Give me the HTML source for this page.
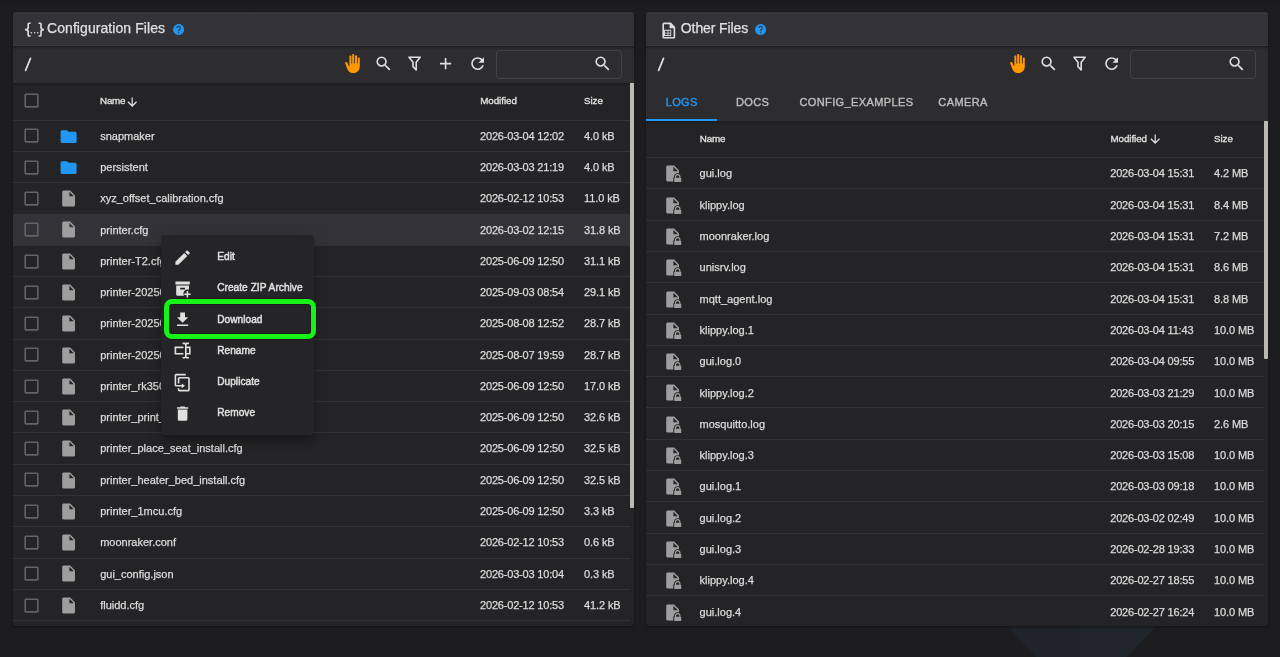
<!DOCTYPE html><html><head><meta charset="utf-8"><style>
html,body{margin:0;padding:0}
body{width:1280px;height:657px;overflow:hidden;position:relative;background:#1d1d1f;font-family:"Liberation Sans",sans-serif}
.t{position:absolute;line-height:1;white-space:nowrap;-webkit-text-stroke:0.25px currentColor}
.ic{position:absolute;display:block}
.b{position:absolute}
.wrap{position:absolute;left:0;top:0;width:1280px;height:657px;will-change:transform}

</style></head><body>
<div class="wrap">
<div class="b" style="left:0;top:0;width:1280px;height:12px;background:linear-gradient(#1a1a1c,#1d1d1f)"></div>
<svg class="ic" style="left:0;top:0;width:1280px;height:657px" viewBox="0 0 1280 657"><path d="M1006,625 L1157,625 L1127,657 L1036,657 Z" fill="#1f232a"/><path d="M1081,625 L1157,625 L1127,657 L1081,657 Z" fill="#1f252b"/></svg>
</div>
<div class="b" style="left:13px;top:12px;width:621px;height:613.5px;border-radius:3px;background:#242426;box-shadow:0 1px 3px rgba(0,0,0,.45)"></div>
<div class="wrap" style="clip-path:inset(12px 646px 31.5px 13px round 3px)">
<div class="b" style="left:13px;top:12px;width:621px;height:33.5px;background:#333237"></div>
<div class="b" style="left:13px;top:12.6px;width:621px;height:1px;background:#38373c"></div>
<div class="b" style="left:13px;top:44.5px;width:621px;height:1px;background:#3b3a3f"></div>
<div class="b" style="left:13px;top:45.5px;width:621px;height:1.5px;background:#1f1f21"></div>
<div class="b" style="left:13px;top:47px;width:621px;height:36px;background:#2d2d30"></div>
<div class="b" style="left:13px;top:47px;width:621px;height:3px;background:linear-gradient(rgba(0,0,0,.22),rgba(0,0,0,0))"></div>
<svg class="ic" style="left:25.00px;top:20.00px;width:19.2px;height:19.2px" viewBox="0 0 24 24"><path fill="#e0e0e0" fill-rule="nonzero" d="M5,3H7V5H5V10A2,2 0 0,1 3,12A2,2 0 0,1 5,14V19H7V21H5C3.930,20.730 3,20.100 3,19V15A2,2 0 0,0 1,13H0V11H1A2,2 0 0,0 3,9V5A2,2 0 0,1 5,3M19,3A2,2 0 0,1 21,5V9A2,2 0 0,0 23,11H24V13H23A2,2 0 0,0 21,15V19A2,2 0 0,1 19,21H17V19H19V14A2,2 0 0,1 21,12A2,2 0 0,1 19,10V5H17V3H19M12,15A1,1 0 0,1 13,16A1,1 0 0,1 12,17A1,1 0 0,1 11,16A1,1 0 0,1 12,15M8,15A1,1 0 0,1 9,16A1,1 0 0,1 8,17A1,1 0 0,1 7,16A1,1 0 0,1 8,15M16,15A1,1 0 0,1 17,16A1,1 0 0,1 16,17A1,1 0 0,1 15,16A1,1 0 0,1 16,15Z"/></svg>
<div class="t" style="left:47.00px;top:21.15px;font-size:14px;color:#e0e0e0;letter-spacing:0.07px;">Configuration Files</div>
<svg class="ic" style="left:171.90px;top:23.40px;width:13.2px;height:13.2px" viewBox="0 0 24 24"><path fill="#2196f3" fill-rule="nonzero" d="M15.07,11.25L14.17,12.17C13.45,12.89 13,13.5 13,15H11V14.5C11,13.39 11.45,12.39 12.17,11.670L13.41,10.410C13.780,10.050 14,9.550 14,9C14,7.890 13.100,7 12,7A2,2 0 0,0 10,9H8A4,4 0 0,1 12,5A4,4 0 0,1 16,9C16,9.880 15.640,10.670 15.070,11.250M13,19H11V17H13M12,2A10,10 0 0,0 2,12A10,10 0 0,0 12,22A10,10 0 0,0 22,12C22,6.470 17.500,2 12,2Z"/></svg>
<svg class="ic" style="left:13px;top:45px;width:30px;height:38px" viewBox="0 0 30 38"><line x1="12.6" y1="25.4" x2="17.5" y2="13.4" stroke="#e0e0e0" stroke-width="1.7" stroke-linecap="round"/></svg>
<div class="b" style="left:496px;top:50px;width:123.5px;height:27px;border:1px solid #434346;border-radius:4px"></div>
<svg class="ic" style="left:592.80px;top:54.30px;width:19.2px;height:19.2px" viewBox="0 0 24 24"><path fill="#e0e0e0" fill-rule="nonzero" d="M9.5,3A6.5,6.5 0 0,1 16,9.5C16,11.11 15.41,12.59 14.44,13.73L14.71,14H15.5L20.5,19L19,20.5L14,15.5V14.71L13.73,14.44C12.59,15.41 11.11,16 9.5,16A6.5,6.5 0 0,1 3,9.5A6.5,6.5 0 0,1 9.5,3M9.5,5C7,5 5,7 5,9.5C5,12 7,14 9.5,14C12,14 14,12 14,9.5C14,7 12,5 9.5,5Z"/></svg>
<svg class="ic" style="left:342.98px;top:54.20px;width:19.2px;height:19.2px" viewBox="0 0 24 24"><path fill="#ff9800" fill-rule="nonzero" d="M13 24C9.74 24 6.81 22 5.6 19L2.57 11.37C2.26 10.58 3 9.79 3.81 10.05L4.6 10.31C5.16 10.5 5.62 10.92 5.84 11.47L7.25 15H8V3.25C8 2.56 8.56 2 9.25 2S10.5 2.56 10.5 3.25V12H11.5V1.25C11.5 .56 12.06 0 12.75 0S14 .56 14 1.25V12H15V2.75C15 2.06 15.56 1.5 16.25 1.5C16.94 1.5 17.5 2.06 17.5 2.75V12H18.5V5.75C18.5 5.06 19.06 4.5 19.75 4.5S21 5.06 21 5.75V16C21 20.42 17.42 24 13 24Z"/></svg>
<svg class="ic" style="left:373.71px;top:54.20px;width:19.2px;height:19.2px" viewBox="0 0 24 24"><path fill="#e0e0e0" fill-rule="nonzero" d="M9.5,3A6.5,6.5 0 0,1 16,9.5C16,11.11 15.41,12.59 14.44,13.73L14.71,14H15.5L20.5,19L19,20.5L14,15.5V14.71L13.73,14.44C12.59,15.41 11.11,16 9.5,16A6.5,6.5 0 0,1 3,9.5A6.5,6.5 0 0,1 9.5,3M9.5,5C7,5 5,7 5,9.5C5,12 7,14 9.5,14C12,14 14,12 14,9.5C14,7 12,5 9.5,5Z"/></svg>
<svg class="ic" style="left:405.04px;top:54.20px;width:19.2px;height:19.2px" viewBox="0 0 24 24"><path fill="#e0e0e0" fill-rule="nonzero" d="M15,19.88C15.04,20.18 14.94,20.5 14.71,20.71C14.32,21.1 13.69,21.1 13.3,20.71L9.29,16.7C9.06,16.47 8.96,16.16 9,15.87V10.75L4.21,4.62C3.87,4.19 3.95,3.56 4.38,3.22C4.57,3.08 4.78,3 5,3V3H19V3C19.22,3 19.43,3.08 19.62,3.22C20.05,3.56 20.13,4.19 19.79,4.62L15,10.75V19.88M7.04,5L11,10.06V15.58L13,17.58V10.05L16.96,5H7.04Z"/></svg>
<svg class="ic" style="left:436.37px;top:54.20px;width:19.2px;height:19.2px" viewBox="0 0 24 24"><path fill="#e0e0e0" fill-rule="nonzero" d="M19,13H13V19H11V13H5V11H11V5H13V11H19V13Z"/></svg>
<svg class="ic" style="left:467.70px;top:54.20px;width:19.2px;height:19.2px" viewBox="0 0 24 24"><path fill="#e0e0e0" fill-rule="nonzero" d="M17.65,6.35C16.2,4.9 14.21,4 12,4A8,8 0 0,0 4,12A8,8 0 0,0 12,20C15.73,20 18.84,17.45 19.73,14H17.65C16.83,16.33 14.61,18 12,18A6,6 0 0,1 6,12A6,6 0 0,1 12,6C13.66,6 15.14,6.69 16.22,7.78L13,11H20V4L17.65,6.35Z"/></svg>
<div class="b" style="left:13px;top:83px;width:617px;height:3px;background:linear-gradient(rgba(0,0,0,.25),rgba(0,0,0,0))"></div>
<svg class="ic" style="left:21.60px;top:91.40px;width:19px;height:19px" viewBox="0 0 24 24"><path fill="#636365" fill-rule="nonzero" d="M19,3H5C3.89,3 3,3.89 3,5V19A2,2 0 0,0 5,21H19A2,2 0 0,0 21,19V5C21,3.89 20.1,3 19,3M19,5V19H5V5H19Z"/></svg>
<div class="t" style="left:100.00px;top:96.00px;font-size:9.8px;color:#e2e2e2;-webkit-text-stroke:0.3px currentColor;letter-spacing:-0.2px;">Name</div>
<svg class="ic" style="left:125.20px;top:94.60px;width:14.4px;height:14.4px" viewBox="0 0 24 24"><path fill="#e2e2e2" fill-rule="nonzero" d="M11,4H13V16L18.5,10.5L19.92,11.92L12,19.84L4.08,11.92L5.5,10.5L11,16V4Z"/></svg>
<div class="t" style="left:480.20px;top:96.00px;font-size:9.8px;color:#e2e2e2;-webkit-text-stroke:0.3px currentColor;letter-spacing:-0.05px;">Modified</div>
<div class="t" style="left:584.00px;top:96.00px;font-size:9.8px;color:#e2e2e2;-webkit-text-stroke:0.3px currentColor;letter-spacing:-0.05px;">Size</div>
<div class="b" style="left:13px;top:119.7px;width:617px;height:1px;background:#333336"></div>
<div class="b" style="left:13px;top:150.97px;width:617px;height:1px;background:#333336"></div>
<svg class="ic" style="left:21.60px;top:126.40px;width:19px;height:19px" viewBox="0 0 24 24"><path fill="#636365" fill-rule="nonzero" d="M19,3H5C3.89,3 3,3.89 3,5V19A2,2 0 0,0 5,21H19A2,2 0 0,0 21,19V5C21,3.89 20.1,3 19,3M19,5V19H5V5H19Z"/></svg>
<svg class="ic" style="left:59.40px;top:126.80px;width:19.2px;height:19.2px" viewBox="0 0 24 24"><path fill="#2196f3" fill-rule="nonzero" d="M10,4H4C2.89,4 2,4.89 2,6V18A2,2 0 0,0 4,20H20A2,2 0 0,0 22,18V8C22,6.89 21.1,6 20,6H12L10,4Z"/></svg>
<div class="t" style="left:100.20px;top:130.69px;font-size:11px;color:#dcdcdc;">snapmaker</div>
<div class="t" style="left:480.00px;top:130.69px;font-size:11px;color:#dcdcdc;letter-spacing:-0.18px;">2026-03-04 12:02</div>
<div class="t" style="left:584.00px;top:130.69px;font-size:11px;color:#dcdcdc;letter-spacing:-0.1px;">4.0 kB</div>
<div class="b" style="left:13px;top:182.25px;width:617px;height:1px;background:#333336"></div>
<svg class="ic" style="left:21.60px;top:157.68px;width:19px;height:19px" viewBox="0 0 24 24"><path fill="#636365" fill-rule="nonzero" d="M19,3H5C3.89,3 3,3.89 3,5V19A2,2 0 0,0 5,21H19A2,2 0 0,0 21,19V5C21,3.89 20.1,3 19,3M19,5V19H5V5H19Z"/></svg>
<svg class="ic" style="left:59.40px;top:158.08px;width:19.2px;height:19.2px" viewBox="0 0 24 24"><path fill="#2196f3" fill-rule="nonzero" d="M10,4H4C2.89,4 2,4.89 2,6V18A2,2 0 0,0 4,20H20A2,2 0 0,0 22,18V8C22,6.89 21.1,6 20,6H12L10,4Z"/></svg>
<div class="t" style="left:100.20px;top:161.96px;font-size:11px;color:#dcdcdc;">persistent</div>
<div class="t" style="left:480.00px;top:161.96px;font-size:11px;color:#dcdcdc;letter-spacing:-0.18px;">2026-03-03 21:19</div>
<div class="t" style="left:584.00px;top:161.96px;font-size:11px;color:#dcdcdc;letter-spacing:-0.1px;">4.0 kB</div>
<div class="b" style="left:13px;top:213.52px;width:617px;height:1px;background:#333336"></div>
<svg class="ic" style="left:21.60px;top:188.95px;width:19px;height:19px" viewBox="0 0 24 24"><path fill="#636365" fill-rule="nonzero" d="M19,3H5C3.89,3 3,3.89 3,5V19A2,2 0 0,0 5,21H19A2,2 0 0,0 21,19V5C21,3.89 20.1,3 19,3M19,5V19H5V5H19Z"/></svg>
<svg class="ic" style="left:59.10px;top:189.15px;width:19.2px;height:19.2px" viewBox="0 0 24 24"><path fill="#9e9e9e" fill-rule="nonzero" d="M13,9V3.5L18.5,9M6,2C4.89,2 4,2.89 4,4V20A2,2 0 0,0 6,22H18A2,2 0 0,0 20,20V8L14,2H6Z"/></svg>
<div class="t" style="left:100.20px;top:193.24px;font-size:11px;color:#dcdcdc;">xyz_offset_calibration.cfg</div>
<div class="t" style="left:480.00px;top:193.24px;font-size:11px;color:#dcdcdc;letter-spacing:-0.18px;">2026-02-12 10:53</div>
<div class="t" style="left:584.00px;top:193.24px;font-size:11px;color:#dcdcdc;letter-spacing:-0.1px;">11.0 kB</div>
<div class="b" style="left:13px;top:214.52px;width:617px;height:30.27px;background:#333337"></div>
<div class="b" style="left:13px;top:244.80px;width:617px;height:1px;background:#333336"></div>
<svg class="ic" style="left:21.60px;top:220.22px;width:19px;height:19px" viewBox="0 0 24 24"><path fill="#636365" fill-rule="nonzero" d="M19,3H5C3.89,3 3,3.89 3,5V19A2,2 0 0,0 5,21H19A2,2 0 0,0 21,19V5C21,3.89 20.1,3 19,3M19,5V19H5V5H19Z"/></svg>
<svg class="ic" style="left:59.10px;top:220.42px;width:19.2px;height:19.2px" viewBox="0 0 24 24"><path fill="#9e9e9e" fill-rule="nonzero" d="M13,9V3.5L18.5,9M6,2C4.89,2 4,2.89 4,4V20A2,2 0 0,0 6,22H18A2,2 0 0,0 20,20V8L14,2H6Z"/></svg>
<div class="t" style="left:100.20px;top:224.51px;font-size:11px;color:#dcdcdc;">printer.cfg</div>
<div class="t" style="left:480.00px;top:224.51px;font-size:11px;color:#dcdcdc;letter-spacing:-0.18px;">2026-03-02 12:15</div>
<div class="t" style="left:584.00px;top:224.51px;font-size:11px;color:#dcdcdc;letter-spacing:-0.1px;">31.8 kB</div>
<div class="b" style="left:13px;top:276.07px;width:617px;height:1px;background:#333336"></div>
<svg class="ic" style="left:21.60px;top:251.50px;width:19px;height:19px" viewBox="0 0 24 24"><path fill="#636365" fill-rule="nonzero" d="M19,3H5C3.89,3 3,3.89 3,5V19A2,2 0 0,0 5,21H19A2,2 0 0,0 21,19V5C21,3.89 20.1,3 19,3M19,5V19H5V5H19Z"/></svg>
<svg class="ic" style="left:59.10px;top:251.70px;width:19.2px;height:19.2px" viewBox="0 0 24 24"><path fill="#9e9e9e" fill-rule="nonzero" d="M13,9V3.5L18.5,9M6,2C4.89,2 4,2.89 4,4V20A2,2 0 0,0 6,22H18A2,2 0 0,0 20,20V8L14,2H6Z"/></svg>
<div class="t" style="left:100.20px;top:255.79px;font-size:11px;color:#dcdcdc;">printer-T2.cfg</div>
<div class="t" style="left:480.00px;top:255.79px;font-size:11px;color:#dcdcdc;letter-spacing:-0.18px;">2025-06-09 12:50</div>
<div class="t" style="left:584.00px;top:255.79px;font-size:11px;color:#dcdcdc;letter-spacing:-0.1px;">31.1 kB</div>
<div class="b" style="left:13px;top:307.35px;width:617px;height:1px;background:#333336"></div>
<svg class="ic" style="left:21.60px;top:282.77px;width:19px;height:19px" viewBox="0 0 24 24"><path fill="#636365" fill-rule="nonzero" d="M19,3H5C3.89,3 3,3.89 3,5V19A2,2 0 0,0 5,21H19A2,2 0 0,0 21,19V5C21,3.89 20.1,3 19,3M19,5V19H5V5H19Z"/></svg>
<svg class="ic" style="left:59.10px;top:282.98px;width:19.2px;height:19.2px" viewBox="0 0 24 24"><path fill="#9e9e9e" fill-rule="nonzero" d="M13,9V3.5L18.5,9M6,2C4.89,2 4,2.89 4,4V20A2,2 0 0,0 6,22H18A2,2 0 0,0 20,20V8L14,2H6Z"/></svg>
<div class="t" style="left:100.20px;top:287.06px;font-size:11px;color:#dcdcdc;">printer-20250903.cfg</div>
<div class="t" style="left:480.00px;top:287.06px;font-size:11px;color:#dcdcdc;letter-spacing:-0.18px;">2025-09-03 08:54</div>
<div class="t" style="left:584.00px;top:287.06px;font-size:11px;color:#dcdcdc;letter-spacing:-0.1px;">29.1 kB</div>
<div class="b" style="left:13px;top:338.62px;width:617px;height:1px;background:#333336"></div>
<svg class="ic" style="left:21.60px;top:314.05px;width:19px;height:19px" viewBox="0 0 24 24"><path fill="#636365" fill-rule="nonzero" d="M19,3H5C3.89,3 3,3.89 3,5V19A2,2 0 0,0 5,21H19A2,2 0 0,0 21,19V5C21,3.89 20.1,3 19,3M19,5V19H5V5H19Z"/></svg>
<svg class="ic" style="left:59.10px;top:314.25px;width:19.2px;height:19.2px" viewBox="0 0 24 24"><path fill="#9e9e9e" fill-rule="nonzero" d="M13,9V3.5L18.5,9M6,2C4.89,2 4,2.89 4,4V20A2,2 0 0,0 6,22H18A2,2 0 0,0 20,20V8L14,2H6Z"/></svg>
<div class="t" style="left:100.20px;top:318.34px;font-size:11px;color:#dcdcdc;">printer-20250808.cfg</div>
<div class="t" style="left:480.00px;top:318.34px;font-size:11px;color:#dcdcdc;letter-spacing:-0.18px;">2025-08-08 12:52</div>
<div class="t" style="left:584.00px;top:318.34px;font-size:11px;color:#dcdcdc;letter-spacing:-0.1px;">28.7 kB</div>
<div class="b" style="left:13px;top:369.90px;width:617px;height:1px;background:#333336"></div>
<svg class="ic" style="left:21.60px;top:345.32px;width:19px;height:19px" viewBox="0 0 24 24"><path fill="#636365" fill-rule="nonzero" d="M19,3H5C3.89,3 3,3.89 3,5V19A2,2 0 0,0 5,21H19A2,2 0 0,0 21,19V5C21,3.89 20.1,3 19,3M19,5V19H5V5H19Z"/></svg>
<svg class="ic" style="left:59.10px;top:345.52px;width:19.2px;height:19.2px" viewBox="0 0 24 24"><path fill="#9e9e9e" fill-rule="nonzero" d="M13,9V3.5L18.5,9M6,2C4.89,2 4,2.89 4,4V20A2,2 0 0,0 6,22H18A2,2 0 0,0 20,20V8L14,2H6Z"/></svg>
<div class="t" style="left:100.20px;top:349.61px;font-size:11px;color:#dcdcdc;">printer-20250807.cfg</div>
<div class="t" style="left:480.00px;top:349.61px;font-size:11px;color:#dcdcdc;letter-spacing:-0.18px;">2025-08-07 19:59</div>
<div class="t" style="left:584.00px;top:349.61px;font-size:11px;color:#dcdcdc;letter-spacing:-0.1px;">28.7 kB</div>
<div class="b" style="left:13px;top:401.17px;width:617px;height:1px;background:#333336"></div>
<svg class="ic" style="left:21.60px;top:376.60px;width:19px;height:19px" viewBox="0 0 24 24"><path fill="#636365" fill-rule="nonzero" d="M19,3H5C3.89,3 3,3.89 3,5V19A2,2 0 0,0 5,21H19A2,2 0 0,0 21,19V5C21,3.89 20.1,3 19,3M19,5V19H5V5H19Z"/></svg>
<svg class="ic" style="left:59.10px;top:376.80px;width:19.2px;height:19.2px" viewBox="0 0 24 24"><path fill="#9e9e9e" fill-rule="nonzero" d="M13,9V3.5L18.5,9M6,2C4.89,2 4,2.89 4,4V20A2,2 0 0,0 6,22H18A2,2 0 0,0 20,20V8L14,2H6Z"/></svg>
<div class="t" style="left:100.20px;top:380.89px;font-size:11px;color:#dcdcdc;">printer_rk3506.cfg</div>
<div class="t" style="left:480.00px;top:380.89px;font-size:11px;color:#dcdcdc;letter-spacing:-0.18px;">2025-06-09 12:50</div>
<div class="t" style="left:584.00px;top:380.89px;font-size:11px;color:#dcdcdc;letter-spacing:-0.1px;">17.0 kB</div>
<div class="b" style="left:13px;top:432.45px;width:617px;height:1px;background:#333336"></div>
<svg class="ic" style="left:21.60px;top:407.87px;width:19px;height:19px" viewBox="0 0 24 24"><path fill="#636365" fill-rule="nonzero" d="M19,3H5C3.89,3 3,3.89 3,5V19A2,2 0 0,0 5,21H19A2,2 0 0,0 21,19V5C21,3.89 20.1,3 19,3M19,5V19H5V5H19Z"/></svg>
<svg class="ic" style="left:59.10px;top:408.07px;width:19.2px;height:19.2px" viewBox="0 0 24 24"><path fill="#9e9e9e" fill-rule="nonzero" d="M13,9V3.5L18.5,9M6,2C4.89,2 4,2.89 4,4V20A2,2 0 0,0 6,22H18A2,2 0 0,0 20,20V8L14,2H6Z"/></svg>
<div class="t" style="left:100.20px;top:412.16px;font-size:11px;color:#dcdcdc;">printer_print_install.cfg</div>
<div class="t" style="left:480.00px;top:412.16px;font-size:11px;color:#dcdcdc;letter-spacing:-0.18px;">2025-06-09 12:50</div>
<div class="t" style="left:584.00px;top:412.16px;font-size:11px;color:#dcdcdc;letter-spacing:-0.1px;">32.6 kB</div>
<div class="b" style="left:13px;top:463.72px;width:617px;height:1px;background:#333336"></div>
<svg class="ic" style="left:21.60px;top:439.15px;width:19px;height:19px" viewBox="0 0 24 24"><path fill="#636365" fill-rule="nonzero" d="M19,3H5C3.89,3 3,3.89 3,5V19A2,2 0 0,0 5,21H19A2,2 0 0,0 21,19V5C21,3.89 20.1,3 19,3M19,5V19H5V5H19Z"/></svg>
<svg class="ic" style="left:59.10px;top:439.35px;width:19.2px;height:19.2px" viewBox="0 0 24 24"><path fill="#9e9e9e" fill-rule="nonzero" d="M13,9V3.5L18.5,9M6,2C4.89,2 4,2.89 4,4V20A2,2 0 0,0 6,22H18A2,2 0 0,0 20,20V8L14,2H6Z"/></svg>
<div class="t" style="left:100.20px;top:443.44px;font-size:11px;color:#dcdcdc;">printer_place_seat_install.cfg</div>
<div class="t" style="left:480.00px;top:443.44px;font-size:11px;color:#dcdcdc;letter-spacing:-0.18px;">2025-06-09 12:50</div>
<div class="t" style="left:584.00px;top:443.44px;font-size:11px;color:#dcdcdc;letter-spacing:-0.1px;">32.5 kB</div>
<div class="b" style="left:13px;top:495.00px;width:617px;height:1px;background:#333336"></div>
<svg class="ic" style="left:21.60px;top:470.42px;width:19px;height:19px" viewBox="0 0 24 24"><path fill="#636365" fill-rule="nonzero" d="M19,3H5C3.89,3 3,3.89 3,5V19A2,2 0 0,0 5,21H19A2,2 0 0,0 21,19V5C21,3.89 20.1,3 19,3M19,5V19H5V5H19Z"/></svg>
<svg class="ic" style="left:59.10px;top:470.62px;width:19.2px;height:19.2px" viewBox="0 0 24 24"><path fill="#9e9e9e" fill-rule="nonzero" d="M13,9V3.5L18.5,9M6,2C4.89,2 4,2.89 4,4V20A2,2 0 0,0 6,22H18A2,2 0 0,0 20,20V8L14,2H6Z"/></svg>
<div class="t" style="left:100.20px;top:474.71px;font-size:11px;color:#dcdcdc;">printer_heater_bed_install.cfg</div>
<div class="t" style="left:480.00px;top:474.71px;font-size:11px;color:#dcdcdc;letter-spacing:-0.18px;">2025-06-09 12:50</div>
<div class="t" style="left:584.00px;top:474.71px;font-size:11px;color:#dcdcdc;letter-spacing:-0.1px;">32.5 kB</div>
<div class="b" style="left:13px;top:526.27px;width:617px;height:1px;background:#333336"></div>
<svg class="ic" style="left:21.60px;top:501.70px;width:19px;height:19px" viewBox="0 0 24 24"><path fill="#636365" fill-rule="nonzero" d="M19,3H5C3.89,3 3,3.89 3,5V19A2,2 0 0,0 5,21H19A2,2 0 0,0 21,19V5C21,3.89 20.1,3 19,3M19,5V19H5V5H19Z"/></svg>
<svg class="ic" style="left:59.10px;top:501.90px;width:19.2px;height:19.2px" viewBox="0 0 24 24"><path fill="#9e9e9e" fill-rule="nonzero" d="M13,9V3.5L18.5,9M6,2C4.89,2 4,2.89 4,4V20A2,2 0 0,0 6,22H18A2,2 0 0,0 20,20V8L14,2H6Z"/></svg>
<div class="t" style="left:100.20px;top:505.99px;font-size:11px;color:#dcdcdc;">printer_1mcu.cfg</div>
<div class="t" style="left:480.00px;top:505.99px;font-size:11px;color:#dcdcdc;letter-spacing:-0.18px;">2025-06-09 12:50</div>
<div class="t" style="left:584.00px;top:505.99px;font-size:11px;color:#dcdcdc;letter-spacing:-0.1px;">3.3 kB</div>
<div class="b" style="left:13px;top:557.55px;width:617px;height:1px;background:#333336"></div>
<svg class="ic" style="left:21.60px;top:532.98px;width:19px;height:19px" viewBox="0 0 24 24"><path fill="#636365" fill-rule="nonzero" d="M19,3H5C3.89,3 3,3.89 3,5V19A2,2 0 0,0 5,21H19A2,2 0 0,0 21,19V5C21,3.89 20.1,3 19,3M19,5V19H5V5H19Z"/></svg>
<svg class="ic" style="left:59.10px;top:533.18px;width:19.2px;height:19.2px" viewBox="0 0 24 24"><path fill="#9e9e9e" fill-rule="nonzero" d="M13,9V3.5L18.5,9M6,2C4.89,2 4,2.89 4,4V20A2,2 0 0,0 6,22H18A2,2 0 0,0 20,20V8L14,2H6Z"/></svg>
<div class="t" style="left:100.20px;top:537.26px;font-size:11px;color:#dcdcdc;">moonraker.conf</div>
<div class="t" style="left:480.00px;top:537.26px;font-size:11px;color:#dcdcdc;letter-spacing:-0.18px;">2026-02-12 10:53</div>
<div class="t" style="left:584.00px;top:537.26px;font-size:11px;color:#dcdcdc;letter-spacing:-0.1px;">0.6 kB</div>
<div class="b" style="left:13px;top:588.83px;width:617px;height:1px;background:#333336"></div>
<svg class="ic" style="left:21.60px;top:564.25px;width:19px;height:19px" viewBox="0 0 24 24"><path fill="#636365" fill-rule="nonzero" d="M19,3H5C3.89,3 3,3.89 3,5V19A2,2 0 0,0 5,21H19A2,2 0 0,0 21,19V5C21,3.89 20.1,3 19,3M19,5V19H5V5H19Z"/></svg>
<svg class="ic" style="left:59.10px;top:564.45px;width:19.2px;height:19.2px" viewBox="0 0 24 24"><path fill="#9e9e9e" fill-rule="nonzero" d="M13,9V3.5L18.5,9M6,2C4.89,2 4,2.89 4,4V20A2,2 0 0,0 6,22H18A2,2 0 0,0 20,20V8L14,2H6Z"/></svg>
<div class="t" style="left:100.20px;top:568.54px;font-size:11px;color:#dcdcdc;">gui_config.json</div>
<div class="t" style="left:480.00px;top:568.54px;font-size:11px;color:#dcdcdc;letter-spacing:-0.18px;">2026-03-03 10:04</div>
<div class="t" style="left:584.00px;top:568.54px;font-size:11px;color:#dcdcdc;letter-spacing:-0.1px;">0.3 kB</div>
<div class="b" style="left:13px;top:620.10px;width:617px;height:1px;background:#333336"></div>
<svg class="ic" style="left:21.60px;top:595.52px;width:19px;height:19px" viewBox="0 0 24 24"><path fill="#636365" fill-rule="nonzero" d="M19,3H5C3.89,3 3,3.89 3,5V19A2,2 0 0,0 5,21H19A2,2 0 0,0 21,19V5C21,3.89 20.1,3 19,3M19,5V19H5V5H19Z"/></svg>
<svg class="ic" style="left:59.10px;top:595.73px;width:19.2px;height:19.2px" viewBox="0 0 24 24"><path fill="#9e9e9e" fill-rule="nonzero" d="M13,9V3.5L18.5,9M6,2C4.89,2 4,2.89 4,4V20A2,2 0 0,0 6,22H18A2,2 0 0,0 20,20V8L14,2H6Z"/></svg>
<div class="t" style="left:100.20px;top:599.81px;font-size:11px;color:#dcdcdc;">fluidd.cfg</div>
<div class="t" style="left:480.00px;top:599.81px;font-size:11px;color:#dcdcdc;letter-spacing:-0.18px;">2026-02-12 10:53</div>
<div class="t" style="left:584.00px;top:599.81px;font-size:11px;color:#dcdcdc;letter-spacing:-0.1px;">41.2 kB</div>
<div class="b" style="left:630.3px;top:83px;width:3.5px;height:424.5px;background:#bcb8b2;border-radius:0 0 1px 1px"></div>
</div>
<div class="b" style="left:646px;top:12px;width:622px;height:613.5px;border-radius:3px;background:#242426;box-shadow:0 1px 3px rgba(0,0,0,.45)"></div>
<div class="wrap" style="clip-path:inset(12px 12px 31.5px 646px round 3px)">
<div class="b" style="left:646px;top:12px;width:622px;height:33.5px;background:#333237"></div>
<div class="b" style="left:646px;top:12.6px;width:622px;height:1px;background:#38373c"></div>
<div class="b" style="left:646px;top:44.5px;width:622px;height:1px;background:#3b3a3f"></div>
<div class="b" style="left:646px;top:45.5px;width:622px;height:1.5px;background:#1f1f21"></div>
<div class="b" style="left:646px;top:47px;width:622px;height:36px;background:#2d2d30"></div>
<div class="b" style="left:646px;top:47px;width:622px;height:3px;background:linear-gradient(rgba(0,0,0,.22),rgba(0,0,0,0))"></div>
<div class="b" style="left:646px;top:83px;width:622px;height:38px;background:#2d2d30"></div>
<svg class="ic" style="left:659.90px;top:20.70px;width:19.2px;height:19.2px" viewBox="0 0 24 24"><path fill="#e0e0e0" fill-rule="evenodd" d="M5,2H13.6L19,7.4V20A2,2 0 0,1 17,22H5A2,2 0 0,1 3,20V4A2,2 0 0,1 5,2Z M5,4V20H17V9H12V4Z M5,11H14V18.8H5Z M6.2,12.3H9.4V14.6H6.2Z M10.4,12.3H13V14.6H10.4Z M6.2,15.6H9.4V17.6H6.2Z M10.4,15.6H13V17.6H10.4Z"/></svg>
<div class="t" style="left:680.80px;top:21.15px;font-size:14px;color:#e0e0e0;letter-spacing:-0.1px;">Other Files</div>
<svg class="ic" style="left:754.40px;top:23.40px;width:13.2px;height:13.2px" viewBox="0 0 24 24"><path fill="#2196f3" fill-rule="nonzero" d="M15.07,11.25L14.17,12.17C13.45,12.89 13,13.5 13,15H11V14.5C11,13.39 11.45,12.39 12.17,11.670L13.41,10.410C13.780,10.050 14,9.550 14,9C14,7.890 13.100,7 12,7A2,2 0 0,0 10,9H8A4,4 0 0,1 12,5A4,4 0 0,1 16,9C16,9.880 15.640,10.670 15.070,11.250M13,19H11V17H13M12,2A10,10 0 0,0 2,12A10,10 0 0,0 12,22A10,10 0 0,0 22,12C22,6.470 17.500,2 12,2Z"/></svg>
<svg class="ic" style="left:646px;top:45px;width:30px;height:38px" viewBox="0 0 30 38"><line x1="12.6" y1="25.4" x2="17.5" y2="13.4" stroke="#e0e0e0" stroke-width="1.7" stroke-linecap="round"/></svg>
<div class="b" style="left:1130px;top:50px;width:123.5px;height:27px;border:1px solid #434346;border-radius:4px"></div>
<svg class="ic" style="left:1226.80px;top:54.30px;width:19.2px;height:19.2px" viewBox="0 0 24 24"><path fill="#e0e0e0" fill-rule="nonzero" d="M9.5,3A6.5,6.5 0 0,1 16,9.5C16,11.11 15.41,12.59 14.44,13.73L14.71,14H15.5L20.5,19L19,20.5L14,15.5V14.71L13.73,14.44C12.59,15.41 11.11,16 9.5,16A6.5,6.5 0 0,1 3,9.5A6.5,6.5 0 0,1 9.5,3M9.5,5C7,5 5,7 5,9.5C5,12 7,14 9.5,14C12,14 14,12 14,9.5C14,7 12,5 9.5,5Z"/></svg>
<svg class="ic" style="left:1008.31px;top:54.20px;width:19.2px;height:19.2px" viewBox="0 0 24 24"><path fill="#ff9800" fill-rule="nonzero" d="M13 24C9.74 24 6.81 22 5.6 19L2.57 11.37C2.26 10.58 3 9.79 3.81 10.05L4.6 10.31C5.16 10.5 5.62 10.92 5.84 11.47L7.25 15H8V3.25C8 2.56 8.56 2 9.25 2S10.5 2.56 10.5 3.25V12H11.5V1.25C11.5 .56 12.06 0 12.75 0S14 .56 14 1.25V12H15V2.75C15 2.06 15.56 1.5 16.25 1.5C16.94 1.5 17.5 2.06 17.5 2.75V12H18.5V5.75C18.5 5.06 19.06 4.5 19.75 4.5S21 5.06 21 5.75V16C21 20.42 17.42 24 13 24Z"/></svg>
<svg class="ic" style="left:1039.04px;top:54.20px;width:19.2px;height:19.2px" viewBox="0 0 24 24"><path fill="#e0e0e0" fill-rule="nonzero" d="M9.5,3A6.5,6.5 0 0,1 16,9.5C16,11.11 15.41,12.59 14.44,13.73L14.71,14H15.5L20.5,19L19,20.5L14,15.5V14.71L13.73,14.44C12.59,15.41 11.11,16 9.5,16A6.5,6.5 0 0,1 3,9.5A6.5,6.5 0 0,1 9.5,3M9.5,5C7,5 5,7 5,9.5C5,12 7,14 9.5,14C12,14 14,12 14,9.5C14,7 12,5 9.5,5Z"/></svg>
<svg class="ic" style="left:1070.37px;top:54.20px;width:19.2px;height:19.2px" viewBox="0 0 24 24"><path fill="#e0e0e0" fill-rule="nonzero" d="M15,19.88C15.04,20.18 14.94,20.5 14.71,20.71C14.32,21.1 13.69,21.1 13.3,20.71L9.29,16.7C9.06,16.47 8.96,16.16 9,15.87V10.75L4.21,4.62C3.87,4.19 3.95,3.56 4.38,3.22C4.57,3.08 4.78,3 5,3V3H19V3C19.22,3 19.43,3.08 19.62,3.22C20.05,3.56 20.13,4.19 19.79,4.62L15,10.75V19.88M7.04,5L11,10.06V15.58L13,17.58V10.05L16.96,5H7.04Z"/></svg>
<svg class="ic" style="left:1101.70px;top:54.20px;width:19.2px;height:19.2px" viewBox="0 0 24 24"><path fill="#e0e0e0" fill-rule="nonzero" d="M17.65,6.35C16.2,4.9 14.21,4 12,4A8,8 0 0,0 4,12A8,8 0 0,0 12,20C15.73,20 18.84,17.45 19.73,14H17.65C16.83,16.33 14.61,18 12,18A6,6 0 0,1 6,12A6,6 0 0,1 12,6C13.66,6 15.14,6.69 16.22,7.78L13,11H20V4L17.65,6.35Z"/></svg>
<div class="t" style="left:646px;top:96.94px;width:71px;text-align:center;font-size:11px;-webkit-text-stroke:0.4px currentColor;letter-spacing:0.38px;text-indent:0.38px;color:#2196f3">LOGS</div>
<div class="t" style="left:717px;top:96.94px;width:71px;text-align:center;font-size:11px;-webkit-text-stroke:0.4px currentColor;letter-spacing:0.38px;text-indent:0.38px;color:#bdbdbd">DOCS</div>
<div class="t" style="left:788px;top:96.94px;width:136.5px;text-align:center;font-size:11px;-webkit-text-stroke:0.4px currentColor;letter-spacing:0.38px;text-indent:0.38px;color:#bdbdbd">CONFIG_EXAMPLES</div>
<div class="t" style="left:927.5px;top:96.94px;width:70.7px;text-align:center;font-size:11px;-webkit-text-stroke:0.4px currentColor;letter-spacing:0.38px;text-indent:0.38px;color:#bdbdbd">CAMERA</div>
<div class="b" style="left:646px;top:119px;width:71px;height:2px;background:#2196f3"></div>
<div class="b" style="left:646px;top:121px;width:618px;height:3px;background:linear-gradient(rgba(0,0,0,.25),rgba(0,0,0,0))"></div>
<div class="t" style="left:699.80px;top:133.70px;font-size:9.8px;color:#e2e2e2;-webkit-text-stroke:0.3px currentColor;letter-spacing:-0.2px;">Name</div>
<div class="t" style="left:1110.40px;top:133.70px;font-size:9.8px;color:#e2e2e2;-webkit-text-stroke:0.3px currentColor;letter-spacing:-0.05px;">Modified</div>
<svg class="ic" style="left:1147.80px;top:132.40px;width:14.4px;height:14.4px" viewBox="0 0 24 24"><path fill="#e2e2e2" fill-rule="nonzero" d="M11,4H13V16L18.5,10.5L19.92,11.92L12,19.84L4.08,11.92L5.5,10.5L11,16V4Z"/></svg>
<div class="t" style="left:1214.00px;top:133.70px;font-size:9.8px;color:#e2e2e2;-webkit-text-stroke:0.3px currentColor;letter-spacing:-0.05px;">Size</div>
<div class="b" style="left:646px;top:157px;width:618px;height:1px;background:#333336"></div>
<div class="b" style="left:646px;top:188.30px;width:618px;height:1px;background:#333336"></div>
<svg class="ic" style="left:663.00px;top:164.30px;width:19.2px;height:19.2px" viewBox="0 0 24 24"><path fill="#9e9e9e" fill-rule="nonzero" d="M6,2C4.89,2 4,2.89 4,4V20A2,2 0 0,0 6,22H12.9V16.6H13.8A4.7,4.7 0 0,1 18.4,11.7C19,11.7 19.5,11.8 20,12V8L14,2H6M13,3.5L18.5,9H13V3.5Z M15,17.6V16A3.4,3.4 0 0,1 21.8,16V17.6H20.4V16A2,2 0 0,0 16.4,16V17.6Z M14.7,17.3H22.1A0.7,0.7 0 0,1 22.8,18V21.9A0.7,0.7 0 0,1 22.1,22.6H14.7A0.7,0.7 0 0,1 14,21.9V18A0.7,0.7 0 0,1 14.7,17.3Z"/></svg>
<div class="t" style="left:699.60px;top:168.49px;font-size:11px;color:#dcdcdc;">gui.log</div>
<div class="t" style="left:1110.20px;top:168.49px;font-size:11px;color:#dcdcdc;letter-spacing:-0.18px;">2026-03-04 15:31</div>
<div class="t" style="left:1214.00px;top:168.49px;font-size:11px;color:#dcdcdc;letter-spacing:-0.1px;">4.2 MB</div>
<div class="b" style="left:646px;top:219.60px;width:618px;height:1px;background:#333336"></div>
<svg class="ic" style="left:663.00px;top:195.60px;width:19.2px;height:19.2px" viewBox="0 0 24 24"><path fill="#9e9e9e" fill-rule="nonzero" d="M6,2C4.89,2 4,2.89 4,4V20A2,2 0 0,0 6,22H12.9V16.6H13.8A4.7,4.7 0 0,1 18.4,11.7C19,11.7 19.5,11.8 20,12V8L14,2H6M13,3.5L18.5,9H13V3.5Z M15,17.6V16A3.4,3.4 0 0,1 21.8,16V17.6H20.4V16A2,2 0 0,0 16.4,16V17.6Z M14.7,17.3H22.1A0.7,0.7 0 0,1 22.8,18V21.9A0.7,0.7 0 0,1 22.1,22.6H14.7A0.7,0.7 0 0,1 14,21.9V18A0.7,0.7 0 0,1 14.7,17.3Z"/></svg>
<div class="t" style="left:699.60px;top:199.79px;font-size:11px;color:#dcdcdc;">klippy.log</div>
<div class="t" style="left:1110.20px;top:199.79px;font-size:11px;color:#dcdcdc;letter-spacing:-0.18px;">2026-03-04 15:31</div>
<div class="t" style="left:1214.00px;top:199.79px;font-size:11px;color:#dcdcdc;letter-spacing:-0.1px;">8.4 MB</div>
<div class="b" style="left:646px;top:250.90px;width:618px;height:1px;background:#333336"></div>
<svg class="ic" style="left:663.00px;top:226.90px;width:19.2px;height:19.2px" viewBox="0 0 24 24"><path fill="#9e9e9e" fill-rule="nonzero" d="M6,2C4.89,2 4,2.89 4,4V20A2,2 0 0,0 6,22H12.9V16.6H13.8A4.7,4.7 0 0,1 18.4,11.7C19,11.7 19.5,11.8 20,12V8L14,2H6M13,3.5L18.5,9H13V3.5Z M15,17.6V16A3.4,3.4 0 0,1 21.8,16V17.6H20.4V16A2,2 0 0,0 16.4,16V17.6Z M14.7,17.3H22.1A0.7,0.7 0 0,1 22.8,18V21.9A0.7,0.7 0 0,1 22.1,22.6H14.7A0.7,0.7 0 0,1 14,21.9V18A0.7,0.7 0 0,1 14.7,17.3Z"/></svg>
<div class="t" style="left:699.60px;top:231.09px;font-size:11px;color:#dcdcdc;">moonraker.log</div>
<div class="t" style="left:1110.20px;top:231.09px;font-size:11px;color:#dcdcdc;letter-spacing:-0.18px;">2026-03-04 15:31</div>
<div class="t" style="left:1214.00px;top:231.09px;font-size:11px;color:#dcdcdc;letter-spacing:-0.1px;">7.2 MB</div>
<div class="b" style="left:646px;top:282.20px;width:618px;height:1px;background:#333336"></div>
<svg class="ic" style="left:663.00px;top:258.20px;width:19.2px;height:19.2px" viewBox="0 0 24 24"><path fill="#9e9e9e" fill-rule="nonzero" d="M6,2C4.89,2 4,2.89 4,4V20A2,2 0 0,0 6,22H12.9V16.6H13.8A4.7,4.7 0 0,1 18.4,11.7C19,11.7 19.5,11.8 20,12V8L14,2H6M13,3.5L18.5,9H13V3.5Z M15,17.6V16A3.4,3.4 0 0,1 21.8,16V17.6H20.4V16A2,2 0 0,0 16.4,16V17.6Z M14.7,17.3H22.1A0.7,0.7 0 0,1 22.8,18V21.9A0.7,0.7 0 0,1 22.1,22.6H14.7A0.7,0.7 0 0,1 14,21.9V18A0.7,0.7 0 0,1 14.7,17.3Z"/></svg>
<div class="t" style="left:699.60px;top:262.39px;font-size:11px;color:#dcdcdc;">unisrv.log</div>
<div class="t" style="left:1110.20px;top:262.39px;font-size:11px;color:#dcdcdc;letter-spacing:-0.18px;">2026-03-04 15:31</div>
<div class="t" style="left:1214.00px;top:262.39px;font-size:11px;color:#dcdcdc;letter-spacing:-0.1px;">8.6 MB</div>
<div class="b" style="left:646px;top:313.50px;width:618px;height:1px;background:#333336"></div>
<svg class="ic" style="left:663.00px;top:289.50px;width:19.2px;height:19.2px" viewBox="0 0 24 24"><path fill="#9e9e9e" fill-rule="nonzero" d="M6,2C4.89,2 4,2.89 4,4V20A2,2 0 0,0 6,22H12.9V16.6H13.8A4.7,4.7 0 0,1 18.4,11.7C19,11.7 19.5,11.8 20,12V8L14,2H6M13,3.5L18.5,9H13V3.5Z M15,17.6V16A3.4,3.4 0 0,1 21.8,16V17.6H20.4V16A2,2 0 0,0 16.4,16V17.6Z M14.7,17.3H22.1A0.7,0.7 0 0,1 22.8,18V21.9A0.7,0.7 0 0,1 22.1,22.6H14.7A0.7,0.7 0 0,1 14,21.9V18A0.7,0.7 0 0,1 14.7,17.3Z"/></svg>
<div class="t" style="left:699.60px;top:293.69px;font-size:11px;color:#dcdcdc;">mqtt_agent.log</div>
<div class="t" style="left:1110.20px;top:293.69px;font-size:11px;color:#dcdcdc;letter-spacing:-0.18px;">2026-03-04 15:31</div>
<div class="t" style="left:1214.00px;top:293.69px;font-size:11px;color:#dcdcdc;letter-spacing:-0.1px;">8.8 MB</div>
<div class="b" style="left:646px;top:344.80px;width:618px;height:1px;background:#333336"></div>
<svg class="ic" style="left:663.00px;top:320.80px;width:19.2px;height:19.2px" viewBox="0 0 24 24"><path fill="#9e9e9e" fill-rule="nonzero" d="M6,2C4.89,2 4,2.89 4,4V20A2,2 0 0,0 6,22H12.9V16.6H13.8A4.7,4.7 0 0,1 18.4,11.7C19,11.7 19.5,11.8 20,12V8L14,2H6M13,3.5L18.5,9H13V3.5Z M15,17.6V16A3.4,3.4 0 0,1 21.8,16V17.6H20.4V16A2,2 0 0,0 16.4,16V17.6Z M14.7,17.3H22.1A0.7,0.7 0 0,1 22.8,18V21.9A0.7,0.7 0 0,1 22.1,22.6H14.7A0.7,0.7 0 0,1 14,21.9V18A0.7,0.7 0 0,1 14.7,17.3Z"/></svg>
<div class="t" style="left:699.60px;top:324.99px;font-size:11px;color:#dcdcdc;">klippy.log.1</div>
<div class="t" style="left:1110.20px;top:324.99px;font-size:11px;color:#dcdcdc;letter-spacing:-0.18px;">2026-03-04 11:43</div>
<div class="t" style="left:1214.00px;top:324.99px;font-size:11px;color:#dcdcdc;letter-spacing:-0.1px;">10.0 MB</div>
<div class="b" style="left:646px;top:376.10px;width:618px;height:1px;background:#333336"></div>
<svg class="ic" style="left:663.00px;top:352.10px;width:19.2px;height:19.2px" viewBox="0 0 24 24"><path fill="#9e9e9e" fill-rule="nonzero" d="M6,2C4.89,2 4,2.89 4,4V20A2,2 0 0,0 6,22H12.9V16.6H13.8A4.7,4.7 0 0,1 18.4,11.7C19,11.7 19.5,11.8 20,12V8L14,2H6M13,3.5L18.5,9H13V3.5Z M15,17.6V16A3.4,3.4 0 0,1 21.8,16V17.6H20.4V16A2,2 0 0,0 16.4,16V17.6Z M14.7,17.3H22.1A0.7,0.7 0 0,1 22.8,18V21.9A0.7,0.7 0 0,1 22.1,22.6H14.7A0.7,0.7 0 0,1 14,21.9V18A0.7,0.7 0 0,1 14.7,17.3Z"/></svg>
<div class="t" style="left:699.60px;top:356.29px;font-size:11px;color:#dcdcdc;">gui.log.0</div>
<div class="t" style="left:1110.20px;top:356.29px;font-size:11px;color:#dcdcdc;letter-spacing:-0.18px;">2026-03-04 09:55</div>
<div class="t" style="left:1214.00px;top:356.29px;font-size:11px;color:#dcdcdc;letter-spacing:-0.1px;">10.0 MB</div>
<div class="b" style="left:646px;top:407.40px;width:618px;height:1px;background:#333336"></div>
<svg class="ic" style="left:663.00px;top:383.40px;width:19.2px;height:19.2px" viewBox="0 0 24 24"><path fill="#9e9e9e" fill-rule="nonzero" d="M6,2C4.89,2 4,2.89 4,4V20A2,2 0 0,0 6,22H12.9V16.6H13.8A4.7,4.7 0 0,1 18.4,11.7C19,11.7 19.5,11.8 20,12V8L14,2H6M13,3.5L18.5,9H13V3.5Z M15,17.6V16A3.4,3.4 0 0,1 21.8,16V17.6H20.4V16A2,2 0 0,0 16.4,16V17.6Z M14.7,17.3H22.1A0.7,0.7 0 0,1 22.8,18V21.9A0.7,0.7 0 0,1 22.1,22.6H14.7A0.7,0.7 0 0,1 14,21.9V18A0.7,0.7 0 0,1 14.7,17.3Z"/></svg>
<div class="t" style="left:699.60px;top:387.59px;font-size:11px;color:#dcdcdc;">klippy.log.2</div>
<div class="t" style="left:1110.20px;top:387.59px;font-size:11px;color:#dcdcdc;letter-spacing:-0.18px;">2026-03-03 21:29</div>
<div class="t" style="left:1214.00px;top:387.59px;font-size:11px;color:#dcdcdc;letter-spacing:-0.1px;">10.0 MB</div>
<div class="b" style="left:646px;top:438.70px;width:618px;height:1px;background:#333336"></div>
<svg class="ic" style="left:663.00px;top:414.70px;width:19.2px;height:19.2px" viewBox="0 0 24 24"><path fill="#9e9e9e" fill-rule="nonzero" d="M6,2C4.89,2 4,2.89 4,4V20A2,2 0 0,0 6,22H12.9V16.6H13.8A4.7,4.7 0 0,1 18.4,11.7C19,11.7 19.5,11.8 20,12V8L14,2H6M13,3.5L18.5,9H13V3.5Z M15,17.6V16A3.4,3.4 0 0,1 21.8,16V17.6H20.4V16A2,2 0 0,0 16.4,16V17.6Z M14.7,17.3H22.1A0.7,0.7 0 0,1 22.8,18V21.9A0.7,0.7 0 0,1 22.1,22.6H14.7A0.7,0.7 0 0,1 14,21.9V18A0.7,0.7 0 0,1 14.7,17.3Z"/></svg>
<div class="t" style="left:699.60px;top:418.89px;font-size:11px;color:#dcdcdc;">mosquitto.log</div>
<div class="t" style="left:1110.20px;top:418.89px;font-size:11px;color:#dcdcdc;letter-spacing:-0.18px;">2026-03-03 20:15</div>
<div class="t" style="left:1214.00px;top:418.89px;font-size:11px;color:#dcdcdc;letter-spacing:-0.1px;">2.6 MB</div>
<div class="b" style="left:646px;top:470.00px;width:618px;height:1px;background:#333336"></div>
<svg class="ic" style="left:663.00px;top:446.00px;width:19.2px;height:19.2px" viewBox="0 0 24 24"><path fill="#9e9e9e" fill-rule="nonzero" d="M6,2C4.89,2 4,2.89 4,4V20A2,2 0 0,0 6,22H12.9V16.6H13.8A4.7,4.7 0 0,1 18.4,11.7C19,11.7 19.5,11.8 20,12V8L14,2H6M13,3.5L18.5,9H13V3.5Z M15,17.6V16A3.4,3.4 0 0,1 21.8,16V17.6H20.4V16A2,2 0 0,0 16.4,16V17.6Z M14.7,17.3H22.1A0.7,0.7 0 0,1 22.8,18V21.9A0.7,0.7 0 0,1 22.1,22.6H14.7A0.7,0.7 0 0,1 14,21.9V18A0.7,0.7 0 0,1 14.7,17.3Z"/></svg>
<div class="t" style="left:699.60px;top:450.19px;font-size:11px;color:#dcdcdc;">klippy.log.3</div>
<div class="t" style="left:1110.20px;top:450.19px;font-size:11px;color:#dcdcdc;letter-spacing:-0.18px;">2026-03-03 15:08</div>
<div class="t" style="left:1214.00px;top:450.19px;font-size:11px;color:#dcdcdc;letter-spacing:-0.1px;">10.0 MB</div>
<div class="b" style="left:646px;top:501.30px;width:618px;height:1px;background:#333336"></div>
<svg class="ic" style="left:663.00px;top:477.30px;width:19.2px;height:19.2px" viewBox="0 0 24 24"><path fill="#9e9e9e" fill-rule="nonzero" d="M6,2C4.89,2 4,2.89 4,4V20A2,2 0 0,0 6,22H12.9V16.6H13.8A4.7,4.7 0 0,1 18.4,11.7C19,11.7 19.5,11.8 20,12V8L14,2H6M13,3.5L18.5,9H13V3.5Z M15,17.6V16A3.4,3.4 0 0,1 21.8,16V17.6H20.4V16A2,2 0 0,0 16.4,16V17.6Z M14.7,17.3H22.1A0.7,0.7 0 0,1 22.8,18V21.9A0.7,0.7 0 0,1 22.1,22.6H14.7A0.7,0.7 0 0,1 14,21.9V18A0.7,0.7 0 0,1 14.7,17.3Z"/></svg>
<div class="t" style="left:699.60px;top:481.49px;font-size:11px;color:#dcdcdc;">gui.log.1</div>
<div class="t" style="left:1110.20px;top:481.49px;font-size:11px;color:#dcdcdc;letter-spacing:-0.18px;">2026-03-03 09:18</div>
<div class="t" style="left:1214.00px;top:481.49px;font-size:11px;color:#dcdcdc;letter-spacing:-0.1px;">10.0 MB</div>
<div class="b" style="left:646px;top:532.60px;width:618px;height:1px;background:#333336"></div>
<svg class="ic" style="left:663.00px;top:508.60px;width:19.2px;height:19.2px" viewBox="0 0 24 24"><path fill="#9e9e9e" fill-rule="nonzero" d="M6,2C4.89,2 4,2.89 4,4V20A2,2 0 0,0 6,22H12.9V16.6H13.8A4.7,4.7 0 0,1 18.4,11.7C19,11.7 19.5,11.8 20,12V8L14,2H6M13,3.5L18.5,9H13V3.5Z M15,17.6V16A3.4,3.4 0 0,1 21.8,16V17.6H20.4V16A2,2 0 0,0 16.4,16V17.6Z M14.7,17.3H22.1A0.7,0.7 0 0,1 22.8,18V21.9A0.7,0.7 0 0,1 22.1,22.6H14.7A0.7,0.7 0 0,1 14,21.9V18A0.7,0.7 0 0,1 14.7,17.3Z"/></svg>
<div class="t" style="left:699.60px;top:512.79px;font-size:11px;color:#dcdcdc;">gui.log.2</div>
<div class="t" style="left:1110.20px;top:512.79px;font-size:11px;color:#dcdcdc;letter-spacing:-0.18px;">2026-03-02 02:49</div>
<div class="t" style="left:1214.00px;top:512.79px;font-size:11px;color:#dcdcdc;letter-spacing:-0.1px;">10.0 MB</div>
<div class="b" style="left:646px;top:563.90px;width:618px;height:1px;background:#333336"></div>
<svg class="ic" style="left:663.00px;top:539.90px;width:19.2px;height:19.2px" viewBox="0 0 24 24"><path fill="#9e9e9e" fill-rule="nonzero" d="M6,2C4.89,2 4,2.89 4,4V20A2,2 0 0,0 6,22H12.9V16.6H13.8A4.7,4.7 0 0,1 18.4,11.7C19,11.7 19.5,11.8 20,12V8L14,2H6M13,3.5L18.5,9H13V3.5Z M15,17.6V16A3.4,3.4 0 0,1 21.8,16V17.6H20.4V16A2,2 0 0,0 16.4,16V17.6Z M14.7,17.3H22.1A0.7,0.7 0 0,1 22.8,18V21.9A0.7,0.7 0 0,1 22.1,22.6H14.7A0.7,0.7 0 0,1 14,21.9V18A0.7,0.7 0 0,1 14.7,17.3Z"/></svg>
<div class="t" style="left:699.60px;top:544.09px;font-size:11px;color:#dcdcdc;">gui.log.3</div>
<div class="t" style="left:1110.20px;top:544.09px;font-size:11px;color:#dcdcdc;letter-spacing:-0.18px;">2026-02-28 19:33</div>
<div class="t" style="left:1214.00px;top:544.09px;font-size:11px;color:#dcdcdc;letter-spacing:-0.1px;">10.0 MB</div>
<div class="b" style="left:646px;top:595.20px;width:618px;height:1px;background:#333336"></div>
<svg class="ic" style="left:663.00px;top:571.20px;width:19.2px;height:19.2px" viewBox="0 0 24 24"><path fill="#9e9e9e" fill-rule="nonzero" d="M6,2C4.89,2 4,2.89 4,4V20A2,2 0 0,0 6,22H12.9V16.6H13.8A4.7,4.7 0 0,1 18.4,11.7C19,11.7 19.5,11.8 20,12V8L14,2H6M13,3.5L18.5,9H13V3.5Z M15,17.6V16A3.4,3.4 0 0,1 21.8,16V17.6H20.4V16A2,2 0 0,0 16.4,16V17.6Z M14.7,17.3H22.1A0.7,0.7 0 0,1 22.8,18V21.9A0.7,0.7 0 0,1 22.1,22.6H14.7A0.7,0.7 0 0,1 14,21.9V18A0.7,0.7 0 0,1 14.7,17.3Z"/></svg>
<div class="t" style="left:699.60px;top:575.39px;font-size:11px;color:#dcdcdc;">klippy.log.4</div>
<div class="t" style="left:1110.20px;top:575.39px;font-size:11px;color:#dcdcdc;letter-spacing:-0.18px;">2026-02-27 18:55</div>
<div class="t" style="left:1214.00px;top:575.39px;font-size:11px;color:#dcdcdc;letter-spacing:-0.1px;">10.0 MB</div>
<div class="b" style="left:646px;top:626.50px;width:618px;height:1px;background:#333336"></div>
<svg class="ic" style="left:663.00px;top:602.50px;width:19.2px;height:19.2px" viewBox="0 0 24 24"><path fill="#9e9e9e" fill-rule="nonzero" d="M6,2C4.89,2 4,2.89 4,4V20A2,2 0 0,0 6,22H12.9V16.6H13.8A4.7,4.7 0 0,1 18.4,11.7C19,11.7 19.5,11.8 20,12V8L14,2H6M13,3.5L18.5,9H13V3.5Z M15,17.6V16A3.4,3.4 0 0,1 21.8,16V17.6H20.4V16A2,2 0 0,0 16.4,16V17.6Z M14.7,17.3H22.1A0.7,0.7 0 0,1 22.8,18V21.9A0.7,0.7 0 0,1 22.1,22.6H14.7A0.7,0.7 0 0,1 14,21.9V18A0.7,0.7 0 0,1 14.7,17.3Z"/></svg>
<div class="t" style="left:699.60px;top:606.69px;font-size:11px;color:#dcdcdc;">gui.log.4</div>
<div class="t" style="left:1110.20px;top:606.69px;font-size:11px;color:#dcdcdc;letter-spacing:-0.18px;">2026-02-27 16:24</div>
<div class="t" style="left:1214.00px;top:606.69px;font-size:11px;color:#dcdcdc;letter-spacing:-0.1px;">10.0 MB</div>
<div class="b" style="left:1264.2px;top:120.5px;width:3.5px;height:238.7px;background:#bcb8b2;border-radius:0 0 1px 1px"></div>
</div>
<div class="wrap">
<div class="b" style="left:161px;top:235px;width:153px;height:200px;border-radius:3px;background:#252527;box-shadow:0 5px 5px -3px rgba(0,0,0,.2),0 8px 10px 1px rgba(0,0,0,.14),0 3px 14px 2px rgba(0,0,0,.12)"></div>
<svg class="ic" style="left:172.80px;top:247.50px;width:19.2px;height:19.2px" viewBox="0 0 24 24"><path fill="#e0e0e0" fill-rule="nonzero" d="M20.71,7.04C21.1,6.65 21.1,6 20.71,5.63L18.37,3.29C18,2.9 17.35,2.9 16.96,3.29L15.12,5.12L18.87,8.87M3,17.25V21H6.75L17.81,9.93L14.06,6.18L3,17.25Z"/></svg>
<div class="t" style="left:217.20px;top:252.05px;font-size:10.1px;color:#e0e0e0;-webkit-text-stroke:0.45px currentColor;letter-spacing:0.05px;">Edit</div>
<svg class="ic" style="left:172.80px;top:278.75px;width:19.2px;height:19.2px" viewBox="0 0 24 24"><path fill="#e0e0e0" fill-rule="nonzero" d="M3,3H21V7H3V3M4,8H20V13.5C19.4,13.2 18.7,13 18,13C15.2,13 13,15.2 13,18C13,19.1 13.35,20.1 13.9,21H6C4.9,21 4,20.1 4,19V8M9.5,11C9.22,11 9,11.22 9,11.5V13H15V11.5C15,11.22 14.78,11 14.5,11H9.5M17,15H19V18H22V20H19V23H17V20H14V18H17V15Z"/></svg>
<div class="t" style="left:217.20px;top:283.30px;font-size:10.1px;color:#e0e0e0;-webkit-text-stroke:0.45px currentColor;letter-spacing:0.05px;">Create ZIP Archive</div>
<svg class="ic" style="left:172.80px;top:310.00px;width:19.2px;height:19.2px" viewBox="0 0 24 24"><path fill="#e0e0e0" fill-rule="nonzero" d="M5,20H19V18H5M19,9H15V3H9V9H5L12,16L19,9Z"/></svg>
<div class="t" style="left:217.20px;top:314.55px;font-size:10.1px;color:#e0e0e0;-webkit-text-stroke:0.45px currentColor;letter-spacing:0.05px;">Download</div>
<svg class="ic" style="left:172.80px;top:341.25px;width:19.2px;height:19.2px" viewBox="0 0 24 24"><path fill="#e0e0e0" fill-rule="nonzero" d="M17,7H22V17H17V19A1,1 0 0,0 18,20H20V22H17.5C16.95,22 16,21.55 16,21C16,21.55 15.05,22 14.5,22H12V20H14A1,1 0 0,0 15,19V5A1,1 0 0,0 14,4H12V2H14.5C15.05,2 16,2.45 16,3C16,2.45 16.95,2 17.5,2H20V4H18A1,1 0 0,0 17,5V7M2,7H13V9H4V15H13V17H2V7M20,15V9H17V15H20Z"/></svg>
<div class="t" style="left:217.20px;top:345.80px;font-size:10.1px;color:#e0e0e0;-webkit-text-stroke:0.45px currentColor;letter-spacing:0.05px;">Rename</div>
<svg class="ic" style="left:172.80px;top:372.50px;width:19.2px;height:19.2px" viewBox="0 0 24 24"><path fill="#e0e0e0" fill-rule="nonzero" d="M11,17H4A2,2 0 0,1 2,15V3A2,2 0 0,1 4,1H16V3H4V15H11V13L15,16L11,19V17M19,21V7H8V13H6V7A2,2 0 0,1 8,5H19A2,2 0 0,1 21,7V21A2,2 0 0,1 19,23H8A2,2 0 0,1 6,21V19H8V21H19Z"/></svg>
<div class="t" style="left:217.20px;top:377.05px;font-size:10.1px;color:#e0e0e0;-webkit-text-stroke:0.45px currentColor;letter-spacing:0.05px;">Duplicate</div>
<svg class="ic" style="left:172.80px;top:403.75px;width:19.2px;height:19.2px" viewBox="0 0 24 24"><path fill="#e0e0e0" fill-rule="nonzero" d="M19,4H15.5L14.5,3H9.5L8.5,4H5V6H19M6,19A2,2 0 0,0 8,21H16A2,2 0 0,0 18,19V7H6V19Z"/></svg>
<div class="t" style="left:217.20px;top:408.30px;font-size:10.1px;color:#e0e0e0;-webkit-text-stroke:0.45px currentColor;letter-spacing:0.05px;">Remove</div>
<div class="b" style="left:163.8px;top:299px;width:152.5px;height:39.7px;box-sizing:border-box;border:5.8px solid #16f316;border-radius:8px;box-shadow:0 0 0 0.6px rgba(20,0,20,.6), inset 0 0 0 0.6px rgba(20,0,20,.6)"></div>
</div>
</body></html>
